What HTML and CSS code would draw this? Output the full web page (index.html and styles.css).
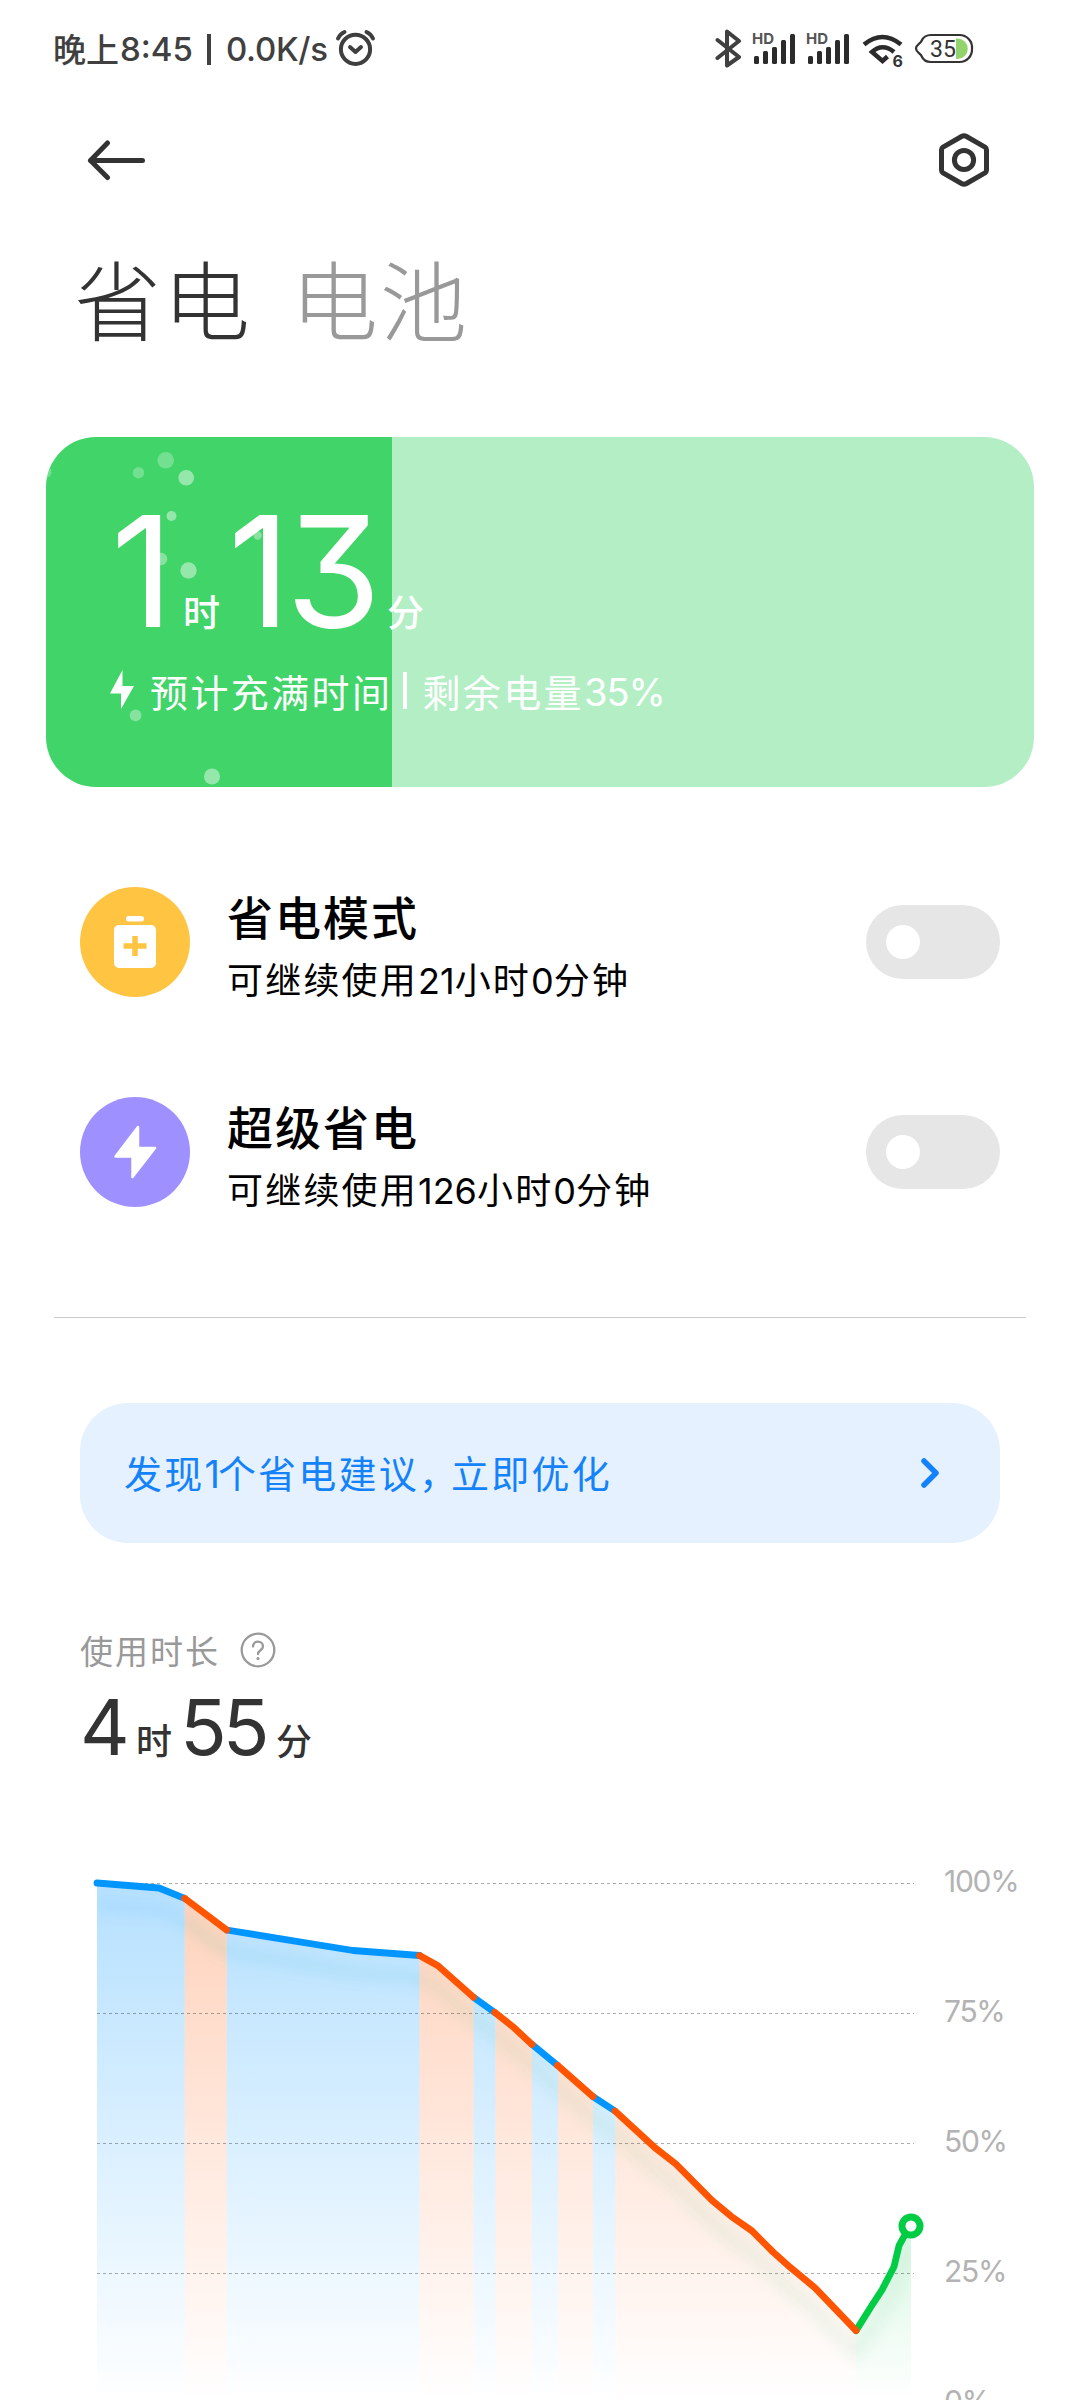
FILE: index.html
```html
<!DOCTYPE html>
<html lang="zh-CN">
<head>
<meta charset="utf-8">
<title>省电与电池</title>
<link rel="stylesheet" href="styles.css">
</head>
<body>
<div class="screen">
  <header class="status">
    <div class="status-text"><span class="st-cjk">晚上</span><span class="st-time">8:45</span><span class="st-bar"></span><span class="st-speed">0.0K/s</span></div>
    <svg class="alarm" width="42" height="42" viewBox="335 29 42 42" fill="none" stroke="#3f3f3f" stroke-width="4" stroke-linecap="round" stroke-linejoin="round"><circle cx="355.5" cy="50.3" r="14.6"/><path d="M350 48l5.500 5 5.500-5M338 39.500q2-4.500 6.500-6.500M366.500 33q4.500 2 6.500 6.500"/></svg>
    <svg class="sys-icons" width="260" height="44" viewBox="715 27 260 44" fill="none">
      <path d="M717.500 40l21.500 17-12 8.500V31.500l12 9.500-21.500 17" stroke="#404040" stroke-width="4" stroke-linecap="round" stroke-linejoin="round"/>
      <g fill="#2b2b2b"><text class="hd" x="752" y="44">HD</text>
        <rect x="754" y="56" width="5" height="8" rx="1.500"/><rect x="763" y="51" width="5" height="13" rx="1.500"/><rect x="772" y="47" width="5" height="17" rx="1.500"/><rect x="781" y="40" width="5" height="24" rx="1.500"/><rect x="790" y="34" width="5" height="30" rx="1.500"/></g>
      <g fill="#2b2b2b"><text class="hd" x="806" y="44">HD</text>
        <rect x="808" y="56" width="5" height="8" rx="1.500"/><rect x="817" y="51" width="5" height="13" rx="1.500"/><rect x="826" y="47" width="5" height="17" rx="1.500"/><rect x="835" y="40" width="5" height="24" rx="1.500"/><rect x="844" y="34" width="5" height="30" rx="1.500"/></g>
      <path d="M864 44.500q18.500-15 37 0" stroke="#2b2b2b" stroke-width="4.500"/>
      <path d="M894 52q-11.500-9.500-22 0l10.500 9 5-4.500" stroke="#2b2b2b" stroke-width="4.500"/>
      <text class="six" x="892.500" y="67">6</text>
      <path d="M956 38.500h1.500a10.300 10.300 0 0 1 0 20.600H956z" fill="#93d36c"/>
      <path d="M931 35h28.500a12.500 12.500 0 0 1 12.500 13.500a12.500 12.500 0 0 1-12.500 13.500H931q-7 0-9.500-6c-1-2.500-5.500-3.500-5.500-7.500s4.500-5 5.500-7.500q2.500-6 9.500-6z" stroke="#333" stroke-width="2.200"/>
      <text class="pct" x="930" y="57">35</text>
    </svg>
  </header>

  <nav class="toolbar">
    <svg width="60" height="44" viewBox="87 138 60 44" fill="none" stroke="#333" stroke-width="5" stroke-linecap="round" stroke-linejoin="round"><path d="M142.500 160.500H90.500M107.500 143L90.500 160.500l17 17"/></svg>
    <svg width="54" height="58" viewBox="937 131 54 58" fill="none" stroke="#333" stroke-width="5" stroke-linejoin="round"><path d="M961.500 136.500q2.500-1.400 5 0l18.500 10.700q1.500 1 1.500 2.800v20q0 1.800-1.500 2.800l-18.500 10.700q-2.500 1.400-5 0L943 172.800q-1.500-1-1.500-2.800v-20q0-1.800 1.500-2.800z"/><circle cx="964" cy="160" r="9.600"/></svg>
  </nav>

  <div class="tabs"><h1 class="tab active">省电</h1><span class="tab">电池</span></div>

  <section class="card">
    <svg class="bubbles" width="988" height="350" viewBox="46 437 988 350" fill="#fff">
      <g opacity=".27"><circle cx="165.700" cy="460.300" r="8.300"/><circle cx="138.500" cy="472.700" r="5.700"/><circle cx="46" cy="472" r="5.500"/></g>
      <g opacity=".45"><circle cx="186.200" cy="477.700" r="7.800"/><circle cx="171.500" cy="516" r="5"/><circle cx="188.500" cy="570.500" r="8.200"/><circle cx="212" cy="776.500" r="8"/></g>
      <g opacity=".36"><circle cx="257.700" cy="535.500" r="4.200"/><circle cx="161" cy="559" r="6.200"/><circle cx="135.600" cy="715.300" r="5.900"/></g>
    </svg>
    <div class="card-time"><span class="big">1</span><span class="unit u1">时</span><span class="big b2">13</span><span class="unit u2">分</span></div>
    <div class="card-info">
      <svg width="25" height="40" viewBox="0 0 25 40" fill="#fff"><path d="M12.500 0v16H24L11 39V23.500H0z"/></svg>
      <span class="cjk">预计充满时间</span><i class="sep"></i><span class="cjk">剩余电量</span><span class="num">35%</span>
    </div>
  </section>

  <section class="modes">
    <div class="mode">
      <svg width="110" height="110" viewBox="0 0 110 110"><circle cx="55" cy="55" r="55" fill="#ffc542"/><rect x="46" y="29" width="18" height="5.500" rx="2.700" fill="#fff"/><rect x="34" y="38" width="42" height="43" rx="5" fill="#fff"/><path d="M55 49v20M43.500 59h23" stroke="#ffc542" stroke-width="5.500"/></svg>
      <div class="mode-text"><h2>省电模式</h2><p>可继续使用<b>21</b>小时<b>0</b>分钟</p></div>
      <span class="toggle"><i></i></span>
    </div>
    <div class="mode">
      <svg width="110" height="110" viewBox="0 0 110 110"><circle cx="55" cy="55" r="55" fill="#9e91ff"/><path d="M58 30v21h17L52.500 80V59.500H35.500z" fill="#fff" stroke="#fff" stroke-width="2.500" stroke-linejoin="round"/></svg>
      <div class="mode-text"><h2>超级省电</h2><p>可继续使用<b>126</b>小时<b>0</b>分钟</p></div>
      <span class="toggle"><i></i></span>
    </div>
  </section>

  <hr class="rule">

  <a class="tip"><span class="tip-text">发现<b>1</b>个省电建议<em>，</em>立即优化</span>
    <svg width="24" height="36" viewBox="0 0 24 36" fill="none" stroke="#1482fa" stroke-width="5.500" stroke-linecap="round" stroke-linejoin="round"><path d="M5 6l12 12L5 30"/></svg>
  </a>

  <section class="usage">
    <div class="usage-label"><span>使用时长</span>
      <svg width="36" height="36" viewBox="0 0 36 36" fill="none"><circle cx="18" cy="18" r="16.300" stroke="#999" stroke-width="2.300"/><path d="M13 14.500c0-6.500 10-6.500 10 0 0 3.500-5 4-5 7.500" stroke="#999" stroke-width="2.300" stroke-linecap="round"/><circle cx="18" cy="26.500" r="1.600" fill="#999"/></svg>
    </div>
    <div class="usage-time"><span class="big">4</span><span class="unit v1">时</span><span class="big v2">55</span><span class="unit v3">分</span></div>
  </section>

  <svg class="chart" width="1080" height="560" viewBox="0 1840 1080 560">
    <defs>
      <linearGradient id="gb" gradientUnits="userSpaceOnUse" x1="0" y1="1882" x2="0" y2="2403"><stop offset="0" stop-color="#0095ff" stop-opacity=".29"/><stop offset="1" stop-color="#0095ff" stop-opacity="0"/></linearGradient>
      <linearGradient id="go" gradientUnits="userSpaceOnUse" x1="0" y1="1882" x2="0" y2="2403"><stop offset="0" stop-color="#ff5500" stop-opacity=".27"/><stop offset="1" stop-color="#ff5500" stop-opacity="0"/></linearGradient>
      <linearGradient id="gg" gradientUnits="userSpaceOnUse" x1="0" y1="2226" x2="0" y2="2403"><stop offset="0" stop-color="#00cc44" stop-opacity=".15"/><stop offset="1" stop-color="#00cc44" stop-opacity="0"/></linearGradient>
      <clipPath id="area"><path d="M97 1883L159 1888 184.700 1898.400 226.700 1930 353 1950.500 419.500 1955.500 438 1965.800 473.500 1997.300 494.700 2012.400 513 2026.800 532 2044.400 557.500 2065.400 593 2096.600 615 2111 655 2147.800 676 2164.100 712 2200.400 731 2216.200 752 2230.900 773 2252 790 2267.200 815 2287.800 856 2330.600 882 2289.900 894 2266.700 899 2245.700 911 2225.700V2400H97z"/></clipPath>
      <filter id="soft" x="-10%" y="-10%" width="120%" height="120%"><feGaussianBlur stdDeviation="6"/></filter>
    </defs>
    <g clip-path="url(#area)">
      <path fill="url(#gb)" d="M97 1870h87.700v530H97zM226.700 1870h192.800v530H226.700zM473.500 1870h22v530h-22zM532 1870h26v530h-26zM593 1870h22.500v530H593z"/>
      <path fill="url(#go)" d="M184.700 1870h42v530h-42zM419.500 1870h54v530h-54zM495.500 1870H532v530h-36.500zM558 1870h35v530h-35zM615.500 1870H856v530H615.500z"/>
      <path fill="url(#gg)" d="M856 2190h55v210h-55z"/>
      <g filter="url(#soft)" fill="none" stroke-width="16" stroke-linejoin="round" transform="translate(0 22)">
        <path stroke="#0090f0" stroke-opacity=".06" d="M97 1883L159 1888 184.700 1898.400"/>
        <path stroke="#20a070" stroke-opacity=".08" d="M184.700 1898.400L226.700 1930"/>
        <path stroke="#10a0c0" stroke-opacity=".07" d="M226.700 1930L353 1950.500 419.500 1955.500"/>
        <path stroke="#40b060" stroke-opacity=".08" d="M419.500 1955.500L438 1965.800 473.500 1997.300 494.700 2012.400 513 2026.800 532 2044.400 557.500 2065.400 593 2096.600 615 2111 655 2147.800 676 2164.100 712 2200.400 731 2216.200 752 2230.900 773 2252 790 2267.200 815 2287.800 856 2330.600 882 2289.900 894 2266.700 899 2245.700 911 2225.700"/>
      </g>
    </g>
    <path stroke="#000" stroke-opacity=".32" stroke-width="1" stroke-dasharray="3 3" d="M97 1883.500H914M97 2013.500H914M97 2143.500H914M97 2273.500H914"/>
    <g fill="none" stroke-width="6.800" stroke-linecap="round" stroke-linejoin="round">
      <path stroke="#00cc44" d="M856 2330.600L871 2306.700 882 2289.900 894 2266.700 899 2245.700 903 2238.300 911 2225.700"/>
      <path stroke="#0095ff" d="M97 1883L159 1888 184.700 1898.400M226.700 1930L353 1950.500 419.500 1955.500M473.500 1997.300L494.700 2012.400M532 2044.400L557.500 2065.400M593 2096.600L615 2111"/>
      <path stroke="#ff5500" d="M184.700 1898.400L226.700 1930M419.500 1955.500L438 1965.800 473.500 1997.300M494.700 2012.400L513 2026.800 532 2044.400M557.500 2065.400L593 2096.600M615 2111L655 2147.800 676 2164.100 712 2200.400 731 2216.200 752 2230.900 773 2252 790 2267.200 815 2287.800 856 2330.600"/>
    </g>
    <circle cx="911" cy="2226" r="9" fill="#fff" stroke="#00cc44" stroke-width="7"/>
    <g class="axis"><text x="944" y="1892">100%</text><text x="944" y="2022">75%</text><text x="944" y="2152">50%</text><text x="944" y="2282">25%</text><text x="944" y="2412">0%</text></g>
  </svg>
</div>
</body>
</html>
```
FILE: styles.css
```css
* { box-sizing: border-box; margin: 0; padding: 0; }
body { background: #fff; }
i, em { font-style: normal; }
.screen {
  width: 1080px; height: 2400px; overflow: hidden;
  display: flex; flex-direction: column;
  background: #fff; color: #333;
  font-family: Inter, "Noto Sans CJK SC", sans-serif;
  white-space: nowrap;
}
.status { height: 100px; padding: 0 105px 2px 53px; display: flex; align-items: center; flex: none; }
.status-text { display: flex; align-items: center; font-size: 33px; font-weight: 500; color: #404040; line-height: 40px; }
.st-cjk { width: 67px; font-family: "Noto Sans CJK SC", sans-serif; padding-bottom: 2px; }
.st-time { width: 87px; }
.st-bar { width: 4px; height: 31px; margin-right: 15px; background: #404040; }
.st-speed { width: 109px; letter-spacing: -.3px; }
.alarm { flex: none; }
.sys-icons { margin-left: auto; flex: none; }
.hd { font: 700 15px Inter, sans-serif; fill: #555; }
.six { font: 700 16px Inter, sans-serif; fill: #333; }
.pct { font: 400 23px Roboto, sans-serif; fill: #333; }

.toolbar { height: 120px; padding: 0 89px 0 87px; display: flex; align-items: center; justify-content: space-between; flex: none; }

.tabs { height: 217px; padding: 17px 0 0 74px; display: flex; gap: 39px; flex: none; }
.tab { font: 300 87px/120px "Noto Sans CJK SC", sans-serif; letter-spacing: 2px; color: #999; }
.tab.active { color: #333; }

.card {
  position: relative; flex: none; height: 350px; margin: 0 46px; overflow: hidden;
  border-radius: 50px; color: #fff;
  background: linear-gradient(90deg, #40d469 346px, #b3eec5 346px);
}
.bubbles { position: absolute; left: 0; top: 0; }
.card-time { position: relative; display: flex; align-items: baseline; height: 208px; padding: 44px 0 0 65px; }
.card-time .big { font-size: 154px; font-weight: 400; line-height: 180px; font-feature-settings: "cv09"; width: 72px; }
.card-time .b2 { width: 159px; letter-spacing: -5px; }
.unit { font-family: "Noto Sans CJK SC", sans-serif; font-weight: 500; font-size: 37px; line-height: 40px; }
.u1 { width: 45px; }
.card-info { position: relative; display: flex; align-items: center; height: 90px; padding-left: 64px; font-size: 38px; }
.card-info .cjk { font-family: "Noto Sans CJK SC", sans-serif; letter-spacing: 2.400px; }
.card-info svg { margin-right: 15px; }
.card-info .sep { width: 4px; height: 37px; margin: 0 15px 0 11px; background: #fff; }
.card-info .num { letter-spacing: -1px; padding-top: 3px; }

.modes { flex: none; height: 530px; padding: 100px 80px 0; display: flex; flex-direction: column; gap: 100px; }
.mode { display: flex; align-items: center; height: 110px; color: #000; }
.mode-text { margin-left: 37px; padding-top: 13px; flex: 1; }
.mode-text h2 { font: 500 46px/62px "Noto Sans CJK SC", sans-serif; letter-spacing: 2px; }
.mode-text p { font: 400 36px/64px "Noto Sans CJK SC", sans-serif; letter-spacing: 2.200px; }
.mode-text b, .tip b { font-family: Inter, sans-serif; font-weight: 400; letter-spacing: -2px; }
.mode-text b { letter-spacing: 0; }
.toggle { width: 134px; height: 74px; border-radius: 37px; background: #e6e6e6; padding: 20px; }
.toggle i { display: block; width: 34px; height: 34px; border-radius: 50%; background: #fff; }

.rule { flex: none; border: 0; height: 1px; margin: 0 54px; background: #ccc; }

.tip {
  flex: none; margin: 85px 80px 0; height: 140px; padding: 0 57px 0 44px; border-radius: 48px;
  display: flex; align-items: center; justify-content: space-between;
  background: #e5f1ff; color: #1482fa;
}
.tip-text { font-family: "Noto Sans CJK SC", sans-serif; font-size: 38px; letter-spacing: 2.200px; padding-bottom: 4px; }
.tip em { font-feature-settings: "halt"; margin-right: 11px; }

.usage { flex: none; height: 297px; padding: 84px 0 0 80px; }
.usage-label { display: flex; align-items: center; height: 46px; gap: 20px; font: 400 33px/46px "Noto Sans CJK SC", sans-serif; letter-spacing: 2px; color: #999; }
.usage-time { display: flex; align-items: baseline; }
.usage-time .big { font-size: 77px; font-weight: 400; line-height: 108px; width: 56px; letter-spacing: -4px; }
.usage-time .v1 { width: 44px; }
.usage-time .v2 { width: 96px; }
.usage-time .unit { font-size: 36px; font-weight: 500; }

.chart { flex: none; display: block; }
.axis text { font: 400 30px Inter, sans-serif; letter-spacing: -1.300px; fill: #b3b3b3; }
```
